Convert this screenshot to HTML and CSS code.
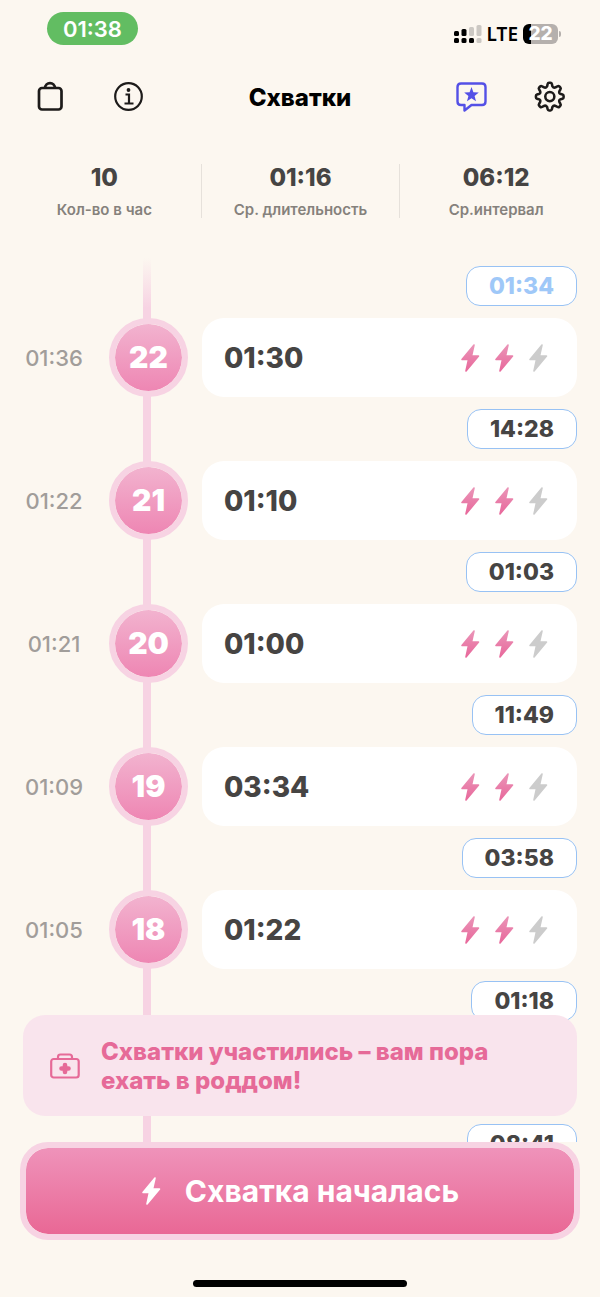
FILE: index.html
```
<!DOCTYPE html>
<html lang="ru">
<head>
    <meta charset="UTF-8">
    <meta name="viewport" content="width=device-width, initial-scale=1.0">
    <title>Схватки</title>
    <link rel="stylesheet" href="styles.css">
</head>
<body>
    <svg class="defs" aria-hidden="true">
        <defs>
            <linearGradient id="pink" x1="0" y1="0" x2="0" y2="1">
                <stop offset="0" stop-color="#ea94b7"/>
                <stop offset="1" stop-color="#e8689b"/>
            </linearGradient>
            <symbol id="bolt" viewBox="0 0 20 30">
                <path d="M14 2 2 16.500H8.500L6 28 18.500 13H11.500Z" stroke-width="1.600" stroke-linejoin="round"/>
            </symbol>
        </defs>
    </svg>

    <div class="status-bar">
        <span class="clock">01:38</span>
        <div class="status-icons">
            <svg width="28" height="20" viewBox="0 0 28 20">
                <g fill="#000">
                    <rect x="0" y="7" width="5" height="5" rx="1.500"/>
                    <rect x="7.500" y="5" width="5" height="7" rx="1.500"/>
                    <rect x="0" y="14" width="5" height="5" rx="1.500"/>
                    <rect x="7.500" y="14" width="5" height="5" rx="1.500"/>
                    <rect x="15" y="14" width="5" height="5" rx="1.500"/>
                </g>
                <g fill="#ccc8c3">
                    <rect x="15" y="3" width="5" height="9" rx="1.500"/>
                    <rect x="22.500" y="1" width="5" height="11" rx="1.500"/>
                    <rect x="22.500" y="14" width="5" height="5" rx="1.500"/>
                </g>
            </svg>
            <span class="network">LTE</span>
            <span class="battery">22</span>
        </div>
    </div>

    <header class="nav">
        <div class="nav-group">
            <button class="icon-button" aria-label="Сумка">
                <svg width="32" height="32" viewBox="0 0 32 32" fill="none" stroke="#1d1b1a" stroke-width="2.700">
                    <rect x="5" y="7" width="22.500" height="21.500" rx="3"/>
                    <path d="M11 7.500C11 .300 21 .300 21 7.500"/>
                </svg>
            </button>
            <button class="icon-button" aria-label="Информация">
                <svg width="32" height="32" viewBox="0 0 32 32" fill="none" stroke="#1d1b1a" stroke-width="2.200">
                    <circle cx="16.500" cy="15.500" r="13.300"/>
                    <path d="M13.500 13.500h3.500v9M12.500 22.500h9"/>
                    <circle cx="16.500" cy="9" r="1.900" fill="#1d1b1a" stroke="none"/>
                </svg>
            </button>
        </div>
        <h1>Схватки</h1>
        <div class="nav-group">
            <button class="icon-button" aria-label="Отзыв">
                <svg width="32" height="32" viewBox="0 0 32 32" fill="none" stroke="#5450e6" stroke-width="2.400" stroke-linejoin="round">
                    <path d="M5 2.500H26Q29.500 2.500 29.500 6V20.500Q29.500 24 26 24H15.500L8.500 29.500V24H5Q1.500 24 1.500 20.500V6Q1.500 2.500 5 2.500Z"/>
                    <path d="M15.500 6l1.900 5.200 5.400.3-4.200 3.400 1.400 5.300L15.500 17.200l-4.500 3 1.400-5.300-4.200-3.400 5.400-.3Z" fill="#5450e6" stroke="none"/>
                </svg>
            </button>
            <button class="icon-button" aria-label="Настройки">
                <svg width="34" height="34" viewBox="0 0 36 36" fill="none" stroke="#1d1b1a" stroke-width="2.700" stroke-linejoin="round">
                    <path d="M15.500 4.200Q15.800 3 17 3H18.500Q19.700 3 20 4.200L20.600 6.800Q22 9 24.300 7.600L26 6.600Q27 6 27.900 6.900L28.900 7.900Q29.800 8.800 29.100 9.800L28 11.700Q27 14 29.400 14.900L31.300 15.400Q32.400 15.700 32.400 16.900V18.300Q32.400 19.500 31.300 19.800L29.400 20.300Q27 21.200 28 23.500L29.100 25.400Q29.800 26.400 28.900 27.300L27.900 28.300Q27 29.200 26 28.600L24.300 27.600Q22 26.200 20.600 28.400L20 31Q19.700 32.200 18.500 32.200H17Q15.800 32.200 15.500 31L14.900 28.400Q13.500 26.200 11.200 27.600L9.500 28.600Q8.500 29.200 7.600 28.300L6.600 27.300Q5.700 26.400 6.400 25.400L7.500 23.500Q8.500 21.200 6.100 20.300L4.200 19.800Q3.100 19.500 3.100 18.300V16.900Q3.100 15.700 4.200 15.400L6.100 14.900Q8.500 14 7.500 11.700L6.400 9.800Q5.700 8.800 6.600 7.900L7.600 6.900Q8.500 6 9.500 6.600L11.200 7.600Q13.500 9 14.900 6.800Z"/>
                    <circle cx="17.800" cy="17.600" r="4.800"/>
                </svg>
            </button>
        </div>
    </header>

    <dl class="stats">
        <div class="stat">
            <dt>Кол-во в час</dt>
            <dd>10</dd>
        </div>
        <div class="stat">
            <dt>Ср. длительность</dt>
            <dd>01:16</dd>
        </div>
        <div class="stat">
            <dt>Ср.интервал</dt>
            <dd>06:12</dd>
        </div>
    </dl>

    <main class="timeline">
        <ol class="contractions">
            <li>
                <span class="interval current">01:34</span>
                <div class="entry">
                    <time>01:36</time>
                    <span class="number">22</span>
                    <div class="card">
                        <span>01:30</span>
                        <div class="bolts">
                            <svg class="bolt"><use href="#bolt"/></svg>
                            <svg class="bolt"><use href="#bolt"/></svg>
                            <svg class="bolt off"><use href="#bolt"/></svg>
                        </div>
                    </div>
                </div>
            </li>
            <li>
                <span class="interval">14:28</span>
                <div class="entry">
                    <time>01:22</time>
                    <span class="number">21</span>
                    <div class="card">
                        <span>01:10</span>
                        <div class="bolts">
                            <svg class="bolt"><use href="#bolt"/></svg>
                            <svg class="bolt"><use href="#bolt"/></svg>
                            <svg class="bolt off"><use href="#bolt"/></svg>
                        </div>
                    </div>
                </div>
            </li>
            <li>
                <span class="interval">01:03</span>
                <div class="entry">
                    <time>01:21</time>
                    <span class="number">20</span>
                    <div class="card">
                        <span>01:00</span>
                        <div class="bolts">
                            <svg class="bolt"><use href="#bolt"/></svg>
                            <svg class="bolt"><use href="#bolt"/></svg>
                            <svg class="bolt off"><use href="#bolt"/></svg>
                        </div>
                    </div>
                </div>
            </li>
            <li>
                <span class="interval">11:49</span>
                <div class="entry">
                    <time>01:09</time>
                    <span class="number">19</span>
                    <div class="card">
                        <span>03:34</span>
                        <div class="bolts">
                            <svg class="bolt"><use href="#bolt"/></svg>
                            <svg class="bolt"><use href="#bolt"/></svg>
                            <svg class="bolt off"><use href="#bolt"/></svg>
                        </div>
                    </div>
                </div>
            </li>
            <li>
                <span class="interval">03:58</span>
                <div class="entry">
                    <time>01:05</time>
                    <span class="number">18</span>
                    <div class="card">
                        <span>01:22</span>
                        <div class="bolts">
                            <svg class="bolt"><use href="#bolt"/></svg>
                            <svg class="bolt"><use href="#bolt"/></svg>
                            <svg class="bolt off"><use href="#bolt"/></svg>
                        </div>
                    </div>
                </div>
            </li>
            <li>
                <span class="interval">01:18</span>
                <!-- this row stays under the alert -->
                <div class="entry"></div>
            </li>
            <li>
                <span class="interval">08:41</span>
            </li>
        </ol>

        <div class="alert" role="alert">
            <svg width="30" height="26" viewBox="0 0 30 26" fill="none" stroke="#e66a98" stroke-width="2.200">
                <rect x="1.200" y="6" width="27.500" height="18.500" rx="2.500"/>
                <path d="M8 6V4Q8 1.500 10.500 1.500H19.500Q22 1.500 22 4V6"/>
                <path d="M15 12V19M11.500 15.500H18.500" stroke-width="4.600" stroke-linecap="round"/>
            </svg>
            <p>Схватки участились – вам пора ехать в роддом!</p>
        </div>
    </main>

    <footer class="bottom">
        <button class="start-button">
            <svg class="bolt white"><use href="#bolt"/></svg>
            Схватка началась
        </button>
        <div class="home-bar"></div>
    </footer>
</body>
</html>
```
FILE: styles.css
```
* {
    box-sizing: border-box;
}
body {
    margin: 0;
    height: 100vh;
    display: flex;
    flex-direction: column;
    overflow: hidden;
    background: #fcf7f0;
    color: #464443;
    font-family: Inter, "Liberation Sans", sans-serif;
}
h1, p, dl, dd, ol {
    margin: 0;
    padding: 0;
}
button {
    border: none;
    padding: 0;
    font-family: inherit;
    cursor: pointer;
}
.defs {
    position: absolute;
    width: 0;
    height: 0;
}

/* Status bar */
.status-bar {
    display: flex;
    justify-content: space-between;
    padding: 12px 42px 0 47px;
    height: 62px;
}
.clock {
    width: 91px;
    height: 33px;
    border-radius: 17px;
    background: #62bd62;
    color: white;
    font-size: 22px;
    font-weight: 600;
    line-height: 34px;
    text-align: center;
}
.status-icons {
    display: flex;
    align-items: center;
    gap: 5px;
    height: 44px;
}
.network {
    color: #000;
    font-family: "Noto Sans", sans-serif;
    font-size: 19px;
    font-weight: 600;
}
.battery {
    position: relative;
    width: 35px;
    height: 20px;
    border-radius: 6px;
    background: linear-gradient(to right, #000 8px, #b5b0ad 8px);
    color: white;
    font-size: 19px;
    font-weight: 800;
    line-height: 20px;
    text-align: center;
}
.battery::after {
    content: "";
    position: absolute;
    left: 36px;
    top: 7px;
    width: 2px;
    height: 6px;
    border-radius: 0 2px 2px 0;
    background: #b5b0ad;
}

/* Navigation */
.nav {
    display: flex;
    align-items: center;
    justify-content: space-between;
    height: 70px;
    padding: 0 32px;
}
.nav-group {
    display: flex;
    gap: 42px;
}
.icon-button {
    display: flex;
    align-items: center;
    justify-content: center;
    width: 36px;
    height: 36px;
    background: none;
}
h1 {
    color: #000;
    font-size: 24px;
    font-weight: 800;
}

/* Averages */
.stats {
    display: grid;
    grid-template-columns: 1fr 34% 1fr;
    padding: 32px 8px 40px;
}
.stat {
    display: flex;
    flex-direction: column-reverse;
    gap: 8px;
    height: 54px;
    justify-content: flex-end;
    text-align: center;
}
.stat + .stat {
    border-left: 1px solid #e6e1db;
}
.stat dt {
    color: #85817c;
    font-size: 15px;
    font-weight: 600;
    line-height: 20px;
}
.stat dd {
    font-size: 24px;
    font-weight: 800;
    line-height: 28px;
}

/* Timeline */
.timeline {
    position: relative;
    flex: 1;
    min-height: 0;
    overflow: hidden;
    padding: 0 23px;
}
.contractions {
    list-style: none;
    padding-top: 8px;
    background: linear-gradient(to bottom, rgba(247, 211, 227, 0), #f7d3e3 50px) 120px 0 / 8px 100% no-repeat;
}
.contractions li {
    display: flex;
    flex-direction: column;
    gap: 12px;
    padding-bottom: 12px;
}
.interval {
    align-self: flex-end;
    height: 40px;
    padding: 0 22px;
    border: 1px solid #98c2f4;
    border-radius: 14px;
    background: white;
    font-size: 23px;
    font-weight: 800;
    line-height: 38px;
}
.interval.current {
    color: #9fc8f8;
}
.entry {
    display: grid;
    grid-template-columns: 86px 79px 1fr;
    align-items: center;
    height: 79px;
}
time {
    padding-right: 24px;
    color: #a19d9a;
    font-size: 22px;
    font-weight: 500;
    text-align: center;
}
.number {
    height: 79px;
    border: 6px solid #f7d3e3;
    border-radius: 50%;
    background: linear-gradient(#f2b3cf, #ee86b3) padding-box;
    color: white;
    font-size: 30px;
    font-weight: 900;
    line-height: 67px;
    text-align: center;
}
.card {
    display: flex;
    align-items: center;
    justify-content: space-between;
    height: 79px;
    margin-left: 14px;
    padding: 0 29px 0 22px;
    border-radius: 22px;
    background: white;
    font-size: 28px;
    font-weight: 800;
}
.bolts {
    display: flex;
    gap: 14px;
}
.bolt {
    width: 20px;
    height: 30px;
    fill: url(#pink);
    stroke: url(#pink);
}
.bolt.off {
    fill: #cccccc;
    stroke: #cccccc;
}
.bolt.white {
    fill: white;
    stroke: white;
}

/* Alert lies over the scrolled list */
.alert {
    position: absolute;
    left: 23px;
    right: 23px;
    bottom: 26px;
    display: flex;
    align-items: center;
    gap: 21px;
    padding: 22px 27px 21px;
    border-radius: 22px;
    background: #f9e4ed;
    color: #e66a98;
}
.alert svg {
    flex: none;
}
.alert p {
    max-width: 410px;
    font-size: 24px;
    font-weight: 800;
    line-height: 29px;
}

/* Bottom */
.bottom {
    padding: 0 20px 10px;
}
.start-button {
    display: flex;
    align-items: center;
    justify-content: center;
    gap: 24px;
    width: 100%;
    height: 98px;
    border: 6px solid #f7d3e3;
    border-radius: 28px;
    background: linear-gradient(#ef93ba, #e96895) padding-box;
    color: white;
    font-size: 30px;
    font-weight: 700;
}
.home-bar {
    width: 214px;
    height: 7px;
    margin: 40px auto 0;
    border-radius: 4px;
    background: #000;
}
```
